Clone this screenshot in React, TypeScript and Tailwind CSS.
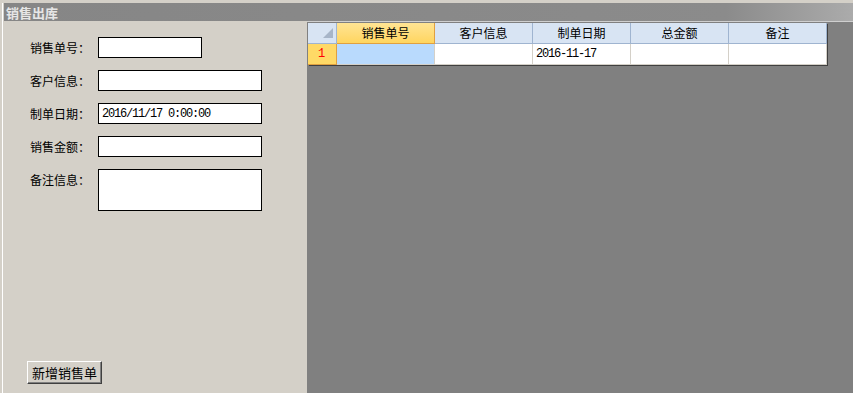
import React from "react";

const cjk = { fontFamily: '"Noto Sans CJK SC", "Noto Sans", sans-serif' };
const mono = { fontFamily: '"Liberation Mono", "DejaVu Sans Mono", monospace' };

function Field({ label, wide = true, value, tall = false }: { label: string; wide?: boolean; value?: string; tall?: boolean }) {
  return (
    <div className={`flex ml-[3px] ${tall ? "items-start" : "items-center"}`}>
      <div className={`w-[68px] text-[12px] text-black ${tall ? "pt-[2px]" : ""}`} style={cjk}>
        {label}
      </div>
      <div
        className={`${wide ? "w-[164px]" : "w-[104px]"} ${tall ? "h-[42px]" : "h-[21px]"} bg-white border border-black flex items-center pl-[3px]`}
      >
        {value && (
          <span className="text-[12px] tracking-[-1.2px] text-black leading-none" style={mono}>
            {value}
          </span>
        )}
      </div>
    </div>
  );
}

const cols = ["客户信息", "制单日期", "总金额", "备注"];

export default function App() {
  return (
    <div className="w-[853px] h-[393px] bg-[#d4d0c8] pt-[3px] pl-[2px] flex flex-col overflow-hidden">
      <div className="flex-1 flex flex-col border-l border-white min-h-0">
        <div className="h-[18px] ml-[1px] bg-gradient-to-r from-[#868686] via-[#8b8b8b] via-85% to-[#ababab] flex items-center pl-[2px]">
          <span className="text-[13px] font-bold text-[#e6e6e6] leading-none" style={cjk}>
            销售出库
          </span>
        </div>
        <div className="flex flex-1 min-h-0">
          <div className="w-[304px] flex flex-col pt-[16px] pl-[24px] pb-[9px]">
            <div className="flex flex-col gap-[12px]">
              <Field label="销售单号：" wide={false} />
              <Field label="客户信息：" />
              <Field label="制单日期：" value="2016/11/17 0:00:00" />
              <Field label="销售金额：" />
              <Field label="备注信息：" tall />
            </div>
            <div className="mt-auto">
              <button
                className="w-[75px] h-[23px] bg-[#d4d0c8] border border-t-white border-l-white border-r-[#404040] border-b-[#404040] shadow-[inset_-1px_-1px_0_#808080] flex items-center justify-center text-[13px] text-black"
                style={cjk}
              >
                新增销售单
              </button>
            </div>
          </div>
          <div className="flex-1 bg-[#808080] border-t border-[#cfcfcf] pt-[1px] pl-[1px]">
            <div className="w-[519px] shadow-[1px_1px_0_#404040] text-[12px]" style={cjk}>
              <div className="flex h-[21px]">
                <div className="w-[29px] bg-[#d8e4f3] border-r border-b border-[#9fb4d0] relative">
                  <svg className="absolute right-[3px] bottom-[5px]" width="10" height="10" viewBox="0 0 10 10">
                    <polygon points="10,0 10,10 0,10" fill="#a7b5c8" />
                  </svg>
                </div>
                <div className="w-[98px] bg-gradient-to-b from-[#ffe493] to-[#ffd55e] border-r border-b border-[#e0a040] flex items-center justify-center text-black">
                  销售单号
                </div>
                {cols.map((c) => (
                  <div
                    key={c}
                    className="w-[98px] bg-[#d8e4f3] border-r border-b border-[#9fb4d0] flex items-center justify-center text-black"
                  >
                    {c}
                  </div>
                ))}
              </div>
              <div className="flex h-[21px]">
                <div className="w-[29px] bg-[#ffd966] border-r border-b border-[#e0a040] flex items-center pl-[10px]">
                  <span className="text-[12px] text-[#ff0000] leading-none" style={mono}>
                    1
                  </span>
                </div>
                <div className="w-[98px] bg-[#b9dafd] border-r border-b border-[#d4d0c8]" />
                <div className="w-[98px] bg-white border-r border-b border-[#d4d0c8]" />
                <div className="w-[98px] bg-white border-r border-b border-[#d4d0c8] flex items-center pl-[3px]">
                  <span className="text-[12px] tracking-[-1.2px] text-black leading-none" style={mono}>
                    2016-11-17
                  </span>
                </div>
                <div className="w-[98px] bg-white border-r border-b border-[#d4d0c8]" />
                <div className="w-[98px] bg-white border-r border-b border-[#d4d0c8]" />
              </div>
            </div>
          </div>
        </div>
      </div>
    </div>
  );
}
